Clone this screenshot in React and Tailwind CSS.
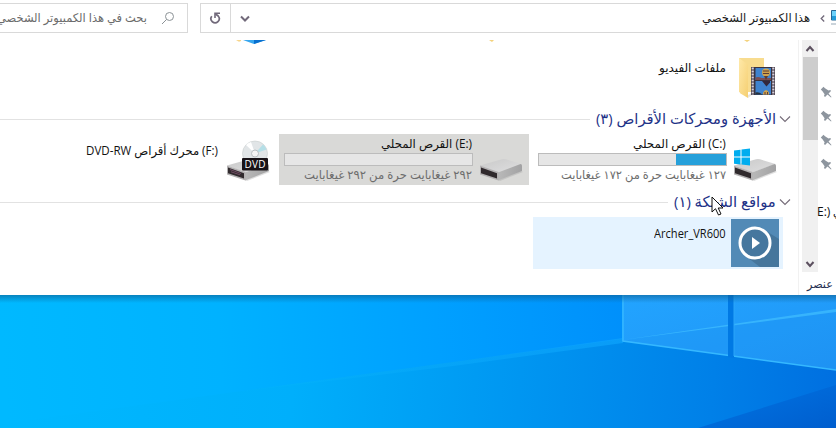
import { useLayoutEffect, useRef, useState } from "react";

// Single line of text, condensed or stretched to the column it belongs to.
function Fit({ w, className = "", dir = "rtl", children }) {
  const ref = useRef(null);
  const [scale, setScale] = useState(1);
  useLayoutEffect(() => {
    setScale(w / ref.current.offsetWidth);
  }, [w]);
  return (
    <div dir={dir} className={`shrink-0 whitespace-nowrap ${className}`} style={{ width: w }}>
      <span
        ref={ref}
        className={`inline-block ${dir === "rtl" ? "origin-right" : "origin-left"}`}
        style={{ transform: `scaleX(${scale})` }}
      >
        {children}
      </span>
    </div>
  );
}

const Ltr = ({ children }) => <bdi dir="ltr">{children}</bdi>;

function Drive({ children }) {
  return (
    <svg width="48" height="48" viewBox="0 0 48 48" className="shrink-0">
      <defs>
        <linearGradient id="top" x1="0" y1="0" x2="1" y2="1">
          <stop offset="0" stopColor="#c9c9c9" />
          <stop offset="1" stopColor="#dfdfe0" />
        </linearGradient>
        <linearGradient id="side" x1="0" y1="0" x2="1" y2="0">
          <stop offset="0" stopColor="#b9b9b9" />
          <stop offset="1" stopColor="#a2a2a3" />
        </linearGradient>
      </defs>
      <path d="M21 42 44 33 46 34 23 43z" fill="#999" opacity=".3" />
      <path d="M3 27.500 25 21.300Q27 20.800 29 21.300L44.500 26 21.500 34.500z" fill="url(#top)" />
      <path d="M21 34.500 43.500 26Q45 26 45 27.500V33L21 42.500z" fill="url(#side)" />
      <path d="M3 27.500 21.500 34V42.500L3 36.500z" fill="#b3b1b2" />
      <path d="M4 29.500 20 35.300V40.500L4 35.200z" fill="#302a2d" />
      {children}
    </svg>
  );
}

function Folder() {
  return (
    <svg width="48" height="48" viewBox="0 0 48 48" className="shrink-0">
      <defs>
        <linearGradient id="folder" x1="0" y1="0" x2="1" y2="1">
          <stop offset="0" stopColor="#ffe9a9" />
          <stop offset="1" stopColor="#f5cf72" />
        </linearGradient>
      </defs>
      <path d="M8 6H33V40H8z" fill="#f8dc8f" />
      <path d="M8 6 17 12.500V46L9.500 41.500Q8 40 8 38z" fill="url(#folder)" />
      <path d="m17 43 4-2v2l-4 3z" fill="#e7e3df" />
      <path d="M20 15H44V43H20z" fill="#3a323f" />
      <path d="M21.700 15.500V43M42.300 15.500V43" stroke="#d5cdda" strokeWidth="2.200" strokeDasharray="2 1" />
      <path d="M24.500 16H40V28H24.500zM24.500 29H40V42.500H24.500z" fill="#3f83cf" />
      <path d="M24.500 25.500q3-1 6 .5h9.500v2H24.500z" fill="#7a4f55" />
      <circle cx="35" cy="20.500" r="4" fill="#d1a34c" />
      <path d="M32 19h6M32 21.500h6" stroke="#5c3b35" />
      <path d="m33 24 2 4 2-4z" fill="#5b3b33" />
      <path d="M31 29h8v1.500l-3.500 4z" fill="#33283c" />
      <path d="M32 42.500v-2q3-5 6 0v2z" fill="#d1a34c" />
      <path d="M34 40v2.500M36.500 40v2.500" stroke="#5c3b35" />
      <path d="M24.500 40.500q3-1 7 2h-7z" fill="#27313c" />
    </svg>
  );
}

function Heading({ w, label }) {
  return (
    <div className="flex h-[19px] items-center pr-[7px]">
      <div className="mr-[6px] mt-px h-px flex-1 bg-[#e2e2e2]" />
      <Fit w={w} className="-mr-px text-[15px] leading-[19px] text-[#1e3287]">{label}</Fit>
      <svg width="12" height="8" viewBox="0 0 12 8" className="ml-1 shrink-0">
        <path d="m1 1.500 5 5 5-5" fill="none" stroke="#756c79" strokeWidth="1.100" />
      </svg>
    </div>
  );
}

function Capacity({ w, labelW, label, captionW, caption, used, className = "" }) {
  return (
    <div className={`flex flex-col items-end ${className}`} style={{ width: w }}>
      <Fit w={labelW} className="mr-px h-[19px] text-[12px] leading-[19px] text-[#111]">{label}</Fit>
      <div className="flex h-[13px] w-full justify-end border border-[#bcbcbc] bg-[#e6e6e6]">
        <div className="bg-[#26a0da]" style={{ width: used }} />
      </div>
      <Fit w={captionW} className="mr-px h-[19px] text-[12px] leading-[17px] text-[#6d6d6d]">{caption}</Fit>
    </div>
  );
}

function Pin() {
  return (
    <svg width="12" height="12" viewBox="0 0 12 12" className="shrink-0">
      <path d="M.8 3.500 3.500 .8 5 2.300 8.500 4.600 10.300 4 11 5 8.500 7.500l3 3.500-.5.500L7.500 8.500 5 11l-1-1 .6-1.800L2.300 5z" fill="#8d959e" />
    </svg>
  );
}

function Wallpaper() {
  return (
    <svg width="836" height="133" viewBox="0 0 836 133" className="block">
      <defs>
        <linearGradient id="sky" x1="0" x2="622" y1="40" y2="0" gradientUnits="userSpaceOnUse">
          <stop offset="0" stopColor="#00b9ff" />
          <stop offset=".35" stopColor="#00b2ff" />
          <stop offset=".7" stopColor="#00a0ff" />
          <stop offset="1" stopColor="#0090fb" />
        </linearGradient>
        <linearGradient id="ground" x1="0" x2="836" y1="70" y2="133" gradientUnits="userSpaceOnUse">
          <stop offset="0" stopColor="#00b9ff" />
          <stop offset=".35" stopColor="#00affb" />
          <stop offset=".62" stopColor="#0096f1" />
          <stop offset=".85" stopColor="#0080e8" />
          <stop offset="1" stopColor="#006fe0" />
        </linearGradient>
        <linearGradient id="pane" x1="0" x2="1" y1="0" y2="1">
          <stop offset="0" stopColor="#22a4ff" />
          <stop offset="1" stopColor="#2094f5" />
        </linearGradient>
        <linearGradient id="beam" x1="0" x2="1" y1="0" y2="0">
          <stop offset="0" stopColor="#10bcff" stopOpacity="0" />
          <stop offset="1" stopColor="#10a8ff" stopOpacity=".6" />
        </linearGradient>
        <linearGradient id="corner" x1="0" x2="1" y1="0" y2="1">
          <stop offset="0" stopColor="#0074e4" />
          <stop offset="1" stopColor="#005bcb" />
        </linearGradient>
        <linearGradient id="shade" x1="0" x2="0" y1="0" y2="1">
          <stop offset="0" stopColor="#0d5f91" stopOpacity=".6" />
          <stop offset=".4" stopColor="#0d5f91" stopOpacity=".35" />
          <stop offset="1" stopColor="#0d5f91" stopOpacity="0" />
        </linearGradient>
      </defs>
      <path d="M0 0H836V133H0z" fill="url(#sky)" />
      <path d="M0 129 213 100 453 67 623 44 836 75V133H0z" fill="url(#ground)" />
      <path d="M213 100 453 67 623 43V48L453 71z" fill="url(#beam)" />
      <path d="M622 0H836V75L622 46z" fill="url(#pane)" />
      <path d="M622 46 836 16V75z" fill="#168bee" opacity=".15" />
      <path d="m622 45 214-31v3z" fill="#43c2ff" opacity=".65" />
      <path d="M623 0V46L836 75" fill="none" stroke="#35b8ff" strokeWidth="1.500" />
      <path d="M728 0h6v63l-6-1z" fill="#0079e4" />
      <path d="M734 0V61" stroke="#2ba6fa" />
      <path d="M698 133 836 90V133z" fill="url(#corner)" opacity=".85" />
      <path d="M0 0H836V8H0z" fill="url(#shade)" />
    </svg>
  );
}

export default function App() {
  return (
    <div dir="ltr" className="relative flex h-[428px] w-[836px] flex-col overflow-hidden bg-white font-['Open_Sans','DejaVu_Sans',sans-serif]">
      <header className="flex h-10 shrink-0 pt-[3px]">
        <div className="flex h-[30px] w-[188px] items-center justify-end overflow-hidden border border-l-0 border-[#d9d9d9] pr-3">
          <Fit w={150} className="text-[12px] leading-5 text-[#6b6b6b]">بحث في هذا الكمبيوتر الشخصي</Fit>
          <svg width="14" height="14" viewBox="0 0 14 14" className="ml-[14px] shrink-0">
            <circle cx="8.500" cy="5.500" r="4" fill="none" stroke="#8b9296" />
            <path d="M5.500 8.500 1 13" stroke="#8b9296" />
          </svg>
        </div>
        <div className="ml-3 flex h-[30px] flex-1 items-center border border-r-0 border-[#d9d9d9]">
          <div className="flex h-full w-[30px] items-center justify-center border-r border-[#d9d9d9]">
            <svg width="12" height="14" viewBox="0 0 12 14" className="-ml-0.5">
              <path d="M2.800 5.200A4.100 4.100 0 1 0 9.200 5L6.500 3" fill="none" stroke="#71697a" strokeWidth="1.700" />
              <path d="M11 2.300H6V7" fill="none" stroke="#71697a" strokeWidth="1.600" />
            </svg>
          </div>
          <svg width="10" height="8" viewBox="0 0 10 8" className="ml-[9px] mt-0.5">
            <path d="m1 1.500 4 4 4-4" fill="none" stroke="#71697a" strokeWidth="2" />
          </svg>
          <div className="flex flex-1 items-center justify-end">
            <Fit w={108} className="text-[12px] leading-5 text-[#1a1a1a]">هذا الكمبيوتر الشخصي</Fit>
            <svg width="5" height="7" viewBox="0 0 5 7" className="ml-[10px]">
              <path d="M4.200.5 1.200 3.500l3 3" fill="none" stroke="#71697a" strokeWidth="1.300" />
            </svg>
            <svg width="5" height="18" viewBox="0 0 5 18" className="ml-[6px]">
              <path d="M.5 1.500H6V11H.5z" fill="#6dd2fb" stroke="#276895" />
              <path d="M1 7h4v4H1z" fill="#239bd9" />
              <path d="M0 15h5" stroke="#97a8b6" />
            </svg>
          </div>
        </div>
      </header>

      <main className="flex h-[255px] shrink-0">
        <section className="flex w-[799px] flex-col border-r border-[#f1f1f1]">
          <div className="flex h-1 items-start pl-[235px]">
            <svg width="520" height="4" viewBox="0 0 520 4">
              <path d="M1 0h5v1l-2 .7z" fill="#f7d58a" />
              <path d="M8 0H31L19 4z" fill="#38a7ef" />
              <path d="M19 0H31L19 4z" fill="#0870cf" />
              <path d="M254 0h5l-2 2zM509 0h6l-3 2z" fill="#f4d27c" />
            </svg>
          </div>
          <div className="mt-2 flex h-[54px] items-start justify-end pr-[19px]">
            <Fit w={67} className="mr-[5px] mt-[6px] text-[12px] leading-5 text-[#111]">ملفات الفيديو</Fit>
            <Folder />
          </div>
          <div className="mt-[3px]">
            <Heading w={180} label="الأجهزة ومحركات الأقراص (٣)" />
          </div>
          <div className="mt-[6px] flex h-[51px]">
            <div className="flex w-[275px] justify-end pr-[3px]">
              <Fit w={132} className="mr-[6px] mt-[7px] text-[12px] leading-5 text-[#111]">
                <Ltr>(F:)</Ltr> محرك أقراص <Ltr>DVD-RW</Ltr>
              </Fit>
              <div className="-mr-px ml-px mt-1 -translate-x-px">
                <Drive>
                  <path d="m6 31.500 11 4M7 33.800l9 3" stroke="#8b5a78" strokeWidth=".7" />
                  <circle cx="31" cy="15.500" r="12.500" fill="#e1e5e7" stroke="#c8cccd" strokeWidth=".6" />
                  <path d="M31 15.500 39 6.500a12.500 12.500 0 0 1 3.500 5z" fill="#b5dfe7" />
                  <path d="M31 15.500 22 7a12 12 0 0 1 5-3z" fill="#fff" />
                  <circle cx="31" cy="15.500" r="3.500" fill="#f5f5f5" stroke="#b9bec2" />
                  <rect x="18" y="20" width="26" height="12.500" rx="1" fill="#181217" />
                  <text x="31" y="30" textAnchor="middle" textLength="21" fontSize="10" fill="#fff">DVD</text>
                </Drive>
              </div>
            </div>
            <div className="ml-1 flex w-[250px] bg-[#d9d9d7] pl-[5px]">
              <Capacity w={189} labelW={91} captionW={168} used={0} caption="٢٩٢ غيغابايت حرة من ٢٩٢ غيغابايت" label={<><Ltr>(E:)</Ltr> القرص المحلي</>} />
              <div className="ml-[4px] mt-1"><Drive /></div>
            </div>
            <div className="ml-[4px] flex w-[250px] pl-[5px]">
              <Capacity w={189} labelW={93} captionW={165} used={50} caption="١٢٧ غيغابايت حرة من ١٧٢ غيغابايت" label={<><Ltr>(C:)</Ltr> القرص المحلي</>} />
              <div className="ml-[4px] mt-1">
                <Drive>
                  <path d="M3 12.500 9.500 11.700V18.500H3zM10.500 11.500 19 10.500V18.500H10.500zM3 19.500H9.500V26.500L3 25.700zM10.500 19.500H19V27.500L10.500 26.500z" fill="#00adef" />
                </Drive>
              </div>
            </div>
          </div>
          <div className="mt-[7px]">
            <Heading w={102} label="مواقع الشبكة (١)" />
          </div>
          <div className="ml-[533px] mt-[6px] flex h-[52px] w-[250px] justify-end bg-[#e5f3ff] pr-1 pt-[2px]">
            <Fit w={72} dir="ltr" className="mr-[5px] mt-[5px] text-[12px] leading-5 text-[#111]">Archer_VR600</Fit>
            <svg width="48" height="48" viewBox="0 0 48 48">
              <path d="M0 0H48V48H0z" fill="#528ab6" />
              <path d="M35 12 48 20V48H29L12 35z" fill="#45769c" />
              <circle cx="24" cy="24" r="15" fill="#46779e" stroke="#fff" strokeWidth="3" />
              <path d="m21 18 8 6-8 6z" fill="#fff" />
            </svg>
          </div>
        </section>
        <aside className="flex w-[37px] flex-col">
          <div className="flex h-[232px] pl-[3px]">
            <div className="flex w-4 shrink-0 flex-col items-center bg-[#f0f0f0]">
              <svg width="16" height="17" viewBox="0 0 16 17"><path d="m4.500 11 3.500-4 3.500 4" fill="none" stroke="#5c505f" strokeWidth="2" /></svg>
              <div className="h-[83px] w-[15px] bg-[#cdcdcd]" />
              <svg width="16" height="17" viewBox="0 0 16 17" className="mt-auto"><path d="m4.500 7 3.500 4 3.500-4" fill="none" stroke="#5c505f" strokeWidth="2" /></svg>
            </div>
            <div className="flex w-[18px] flex-col pt-[46px]">
              <div className="flex flex-col gap-3 pl-[2px]"><Pin /><Pin /><Pin /><Pin /></div>
              <div className="-ml-px mt-[32px] flex text-[12px] leading-5 text-[#111]">
                <Fit w={13} dir="ltr">E:)</Fit>
                <Fit w={8} className="ml-[3px]">ي</Fit>
              </div>
            </div>
          </div>
          <div className="flex h-[23px] pl-[8px]">
            <Fit w={26} className="text-[12px] leading-[23px] text-[#253052]">عنصر</Fit>
          </div>
        </aside>
      </main>
      <Wallpaper />
      <svg width="14" height="21" viewBox="0 0 14 21" className="absolute left-[711px] top-[196px]">
        <path d="M1 1V16L4.500 12.700 7.500 19 10 18 7.200 12H12z" fill="#fff" stroke="#111" />
      </svg>
    </div>
  );
}
